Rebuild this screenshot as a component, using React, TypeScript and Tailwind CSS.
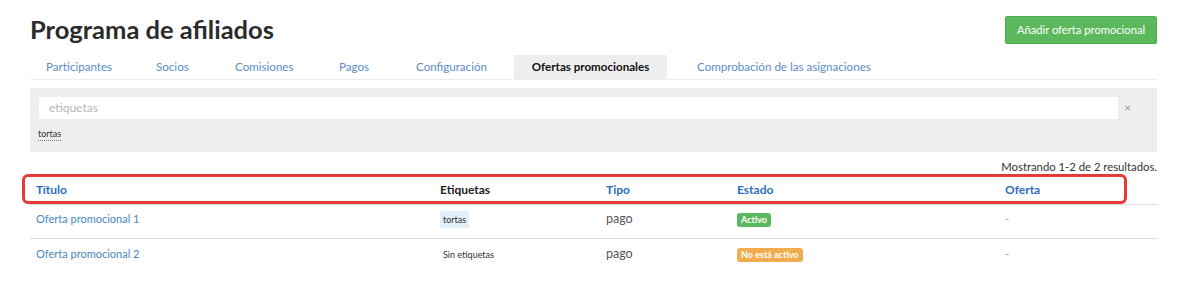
const tabs = [
  { label: 'Participantes', w: 'w-[109px] pl-[16px]' },
  { label: 'Socios', w: 'w-[79px] pl-[17px]' },
  { label: 'Comisiones', w: 'w-[104px] pl-[17px]' },
  { label: 'Pagos', w: 'w-[77px] pl-[17px]' },
  { label: 'Configuración', w: 'w-[115px] pl-[17px]' },
];

const rows = [
  { title: 'Oferta promocional 1', tag: 'tortas', type: 'pago', active: true },
  { title: 'Oferta promocional 2', tag: null, type: 'pago', active: false },
];

const cols = 'grid grid-cols-[404px_166px_131px_268px_158px]';

export default function App() {
  return (
    <div className="h-[298px] w-[1200px] overflow-hidden bg-white pl-[30px] pr-[43px] pt-[14px] font-['Lato','Liberation_Sans',sans-serif] text-[#333]">
      <div className="flex items-start justify-between">
        <h1 className="text-[25.5px] font-bold leading-[30px] text-[#2b2b2b]">Programa de afiliados</h1>
        <button
          type="button"
          className="mt-[2px] h-[28px] w-[152px] rounded-[2px] border border-[#4cae4c] bg-[#5cb85c] text-[11.2px] text-white"
        >
          Añadir oferta promocional
        </button>
      </div>

      <div className="mt-[11px] flex border-b border-[#eee] text-[11.6px]">
        {tabs.map((tab) => (
          <div key={tab.label} className={`flex h-[24px] items-center text-[#5a8dc8] ${tab.w}`}>
            {tab.label}
          </div>
        ))}
        <div className="flex h-[24px] w-[153px] items-center justify-center bg-[#eee] font-bold text-[#111]">
          Ofertas promocionales
        </div>
        <div className="ml-[13px] flex h-[24px] items-center pl-[17px] text-[#5a8dc8]">Comprobación de las asignaciones</div>
      </div>

      <div className="mt-[8px] h-[64px] bg-[#eee] pl-[9px] pt-[9px]">
        <div className="flex items-center">
          <div className="flex h-[22px] w-[1079px] items-center bg-white pl-[10px] text-[12px] text-[#b5b5b5]">etiquetas</div>
          <span className="ml-[6px] text-[12px] text-[#999]">×</span>
        </div>
        <div className="mt-[8px] -ml-[1px] inline-block border-b border-dotted border-[#777] text-[9px] leading-[12px] text-[#333]">
          tortas
        </div>
      </div>

      <div className="mt-[6px] text-right text-[11.3px] leading-[18px] text-[#333]">Mostrando 1-2 de 2 resultados.</div>

      <div className="relative">
        <div className={`${cols} h-[29px] items-center border-b border-[#ddd] text-[12px] font-bold`}>
          <div className="pl-[6px] text-[#2a6ebb]">Título</div>
          <div className="pl-[6px] text-[#222]">Etiquetas</div>
          <div className="pl-[6px] text-[#2a6ebb]">Tipo</div>
          <div className="pl-[6px] text-[#2a6ebb]">Estado</div>
          <div className="pl-[6px] text-[#2a6ebb]">Oferta</div>
        </div>

        {rows.map((row, i) => (
          <div
            key={row.title}
            className={`${cols} h-[34px] items-center pb-[4px] text-[11px] ${i === 0 ? 'border-b border-[#ddd]' : ''}`}
          >
            <div className="pl-[6px] text-[#4a86c5]">{row.title}</div>
            <div className="pl-[6px]">
              {row.tag ? (
                <span className="inline-flex h-[17px] items-center bg-[#e3f0fc] px-[3px] text-[9px] text-[#333]">{row.tag}</span>
              ) : (
                <span className="pl-[3px] text-[9px] text-[#333]">Sin etiquetas</span>
              )}
            </div>
            <div className="pl-[6px] text-[12.5px] text-[#555]">{row.type}</div>
            <div className="pl-[6px]">
              {row.active ? (
                <span className="inline-flex h-[14px] items-center rounded-[3px] bg-[#5cb85c] px-[4px] text-[9px] font-bold text-white">
                  Activo
                </span>
              ) : (
                <span className="inline-flex h-[14px] items-center rounded-[3px] bg-[#f0ad4e] px-[4px] text-[9px] font-bold text-white">
                  No está activo
                </span>
              )}
            </div>
            <div className="pl-[6px] text-[#999]">-</div>
          </div>
        ))}

        <div className="absolute left-[-8px] top-[-2px] h-[30px] w-[1105px] rounded-[6px] border-[3px] border-[#e53935]" />
      </div>
    </div>
  );
}
